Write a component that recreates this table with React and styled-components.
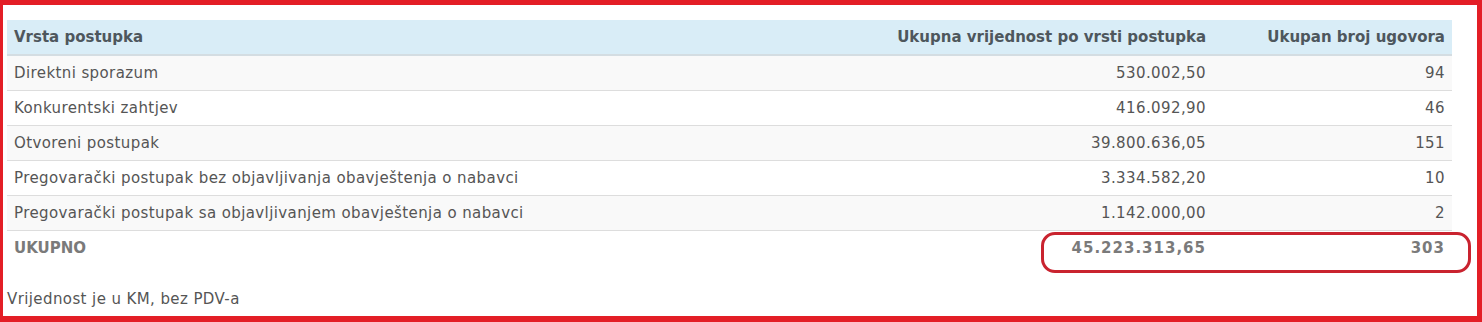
import React from 'react'
import styled, { createGlobalStyle } from 'styled-components'

const Global = createGlobalStyle`
  html, body {
    margin: 0;
    padding: 0;
    background: #ffffff;
  }
  body {
    font-family: "DejaVu Sans", Verdana, sans-serif;
    font-size: 15px;
    letter-spacing: 0.4px;
    color: #555;
  }
`

const Frame = styled.div`
  width: 1482px;
  height: 322px;
  box-sizing: border-box;
  border-style: solid;
  border-color: #e31e26;
  border-width: 5px 5px 6px 3px;
  padding: 15px 25px 0 4px;
  position: relative;
`

const Table = styled.table`
  width: 1445px;
  border-collapse: collapse;
  border-spacing: 0;
  margin-bottom: 25px;
  table-layout: fixed;
`

const HeadCell = styled.th`
  background: #d9edf7;
  color: #4e575d;
  font-weight: bold;
  letter-spacing: 0;
  padding: 8px 7px;
  line-height: 18px;
  border-bottom: 2px solid #d4dde2;
  text-align: ${(p) => (p.$right ? 'right' : 'left')};
  white-space: nowrap;
`

const Row = styled.tr`
  background: ${(p) => (p.$striped ? '#f9f9f9' : '#ffffff')};
`

const Cell = styled.td`
  padding: 8px 7px;
  line-height: 18px;
  border-top: 1px solid #dddddd;
  text-align: ${(p) => (p.$right ? 'right' : 'left')};
  color: #555;
  white-space: nowrap;
`

const TotalCell = styled(Cell)`
  color: #7a7a7a;
  font-weight: bold;
  letter-spacing: ${(p) => (p.$right ? '1px' : '0')};
`

const Note = styled.div`
  line-height: 18px;
  color: #555;
`

const Highlight = styled.div`
  position: absolute;
  left: 1038px;
  top: 227px;
  width: 430px;
  height: 41px;
  box-sizing: border-box;
  border: 3px solid #c9232f;
  border-radius: 14px;
  pointer-events: none;
`

const rows = [
  ['Direktni sporazum', '530.002,50', '94'],
  ['Konkurentski zahtjev', '416.092,90', '46'],
  ['Otvoreni postupak', '39.800.636,05', '151'],
  ['Pregovarački postupak bez objavljivanja obavještenja o nabavci', '3.334.582,20', '10'],
  ['Pregovarački postupak sa objavljivanjem obavještenja o nabavci', '1.142.000,00', '2'],
]

const App = () => {
  return (
    <>
      <Global />
      <Frame>
        <Table>
          <colgroup>
            <col />
            <col style={{ width: 500 }} />
            <col style={{ width: 239 }} />
          </colgroup>
          <thead>
            <tr>
              <HeadCell>Vrsta postupka</HeadCell>
              <HeadCell $right>Ukupna vrijednost po vrsti postupka</HeadCell>
              <HeadCell $right>Ukupan broj ugovora</HeadCell>
            </tr>
          </thead>
          <tbody>
            {rows.map((r, i) => (
              <Row key={r[0]} $striped={i % 2 === 0}>
                <Cell>{r[0]}</Cell>
                <Cell $right>{r[1]}</Cell>
                <Cell $right>{r[2]}</Cell>
              </Row>
            ))}
            <Row>
              <TotalCell>UKUPNO</TotalCell>
              <TotalCell $right>45.223.313,65</TotalCell>
              <TotalCell $right>303</TotalCell>
            </Row>
          </tbody>
        </Table>
        <Note>Vrijednost je u KM, bez PDV-a</Note>
        <Highlight />
      </Frame>
    </>
  )
}

export default App
